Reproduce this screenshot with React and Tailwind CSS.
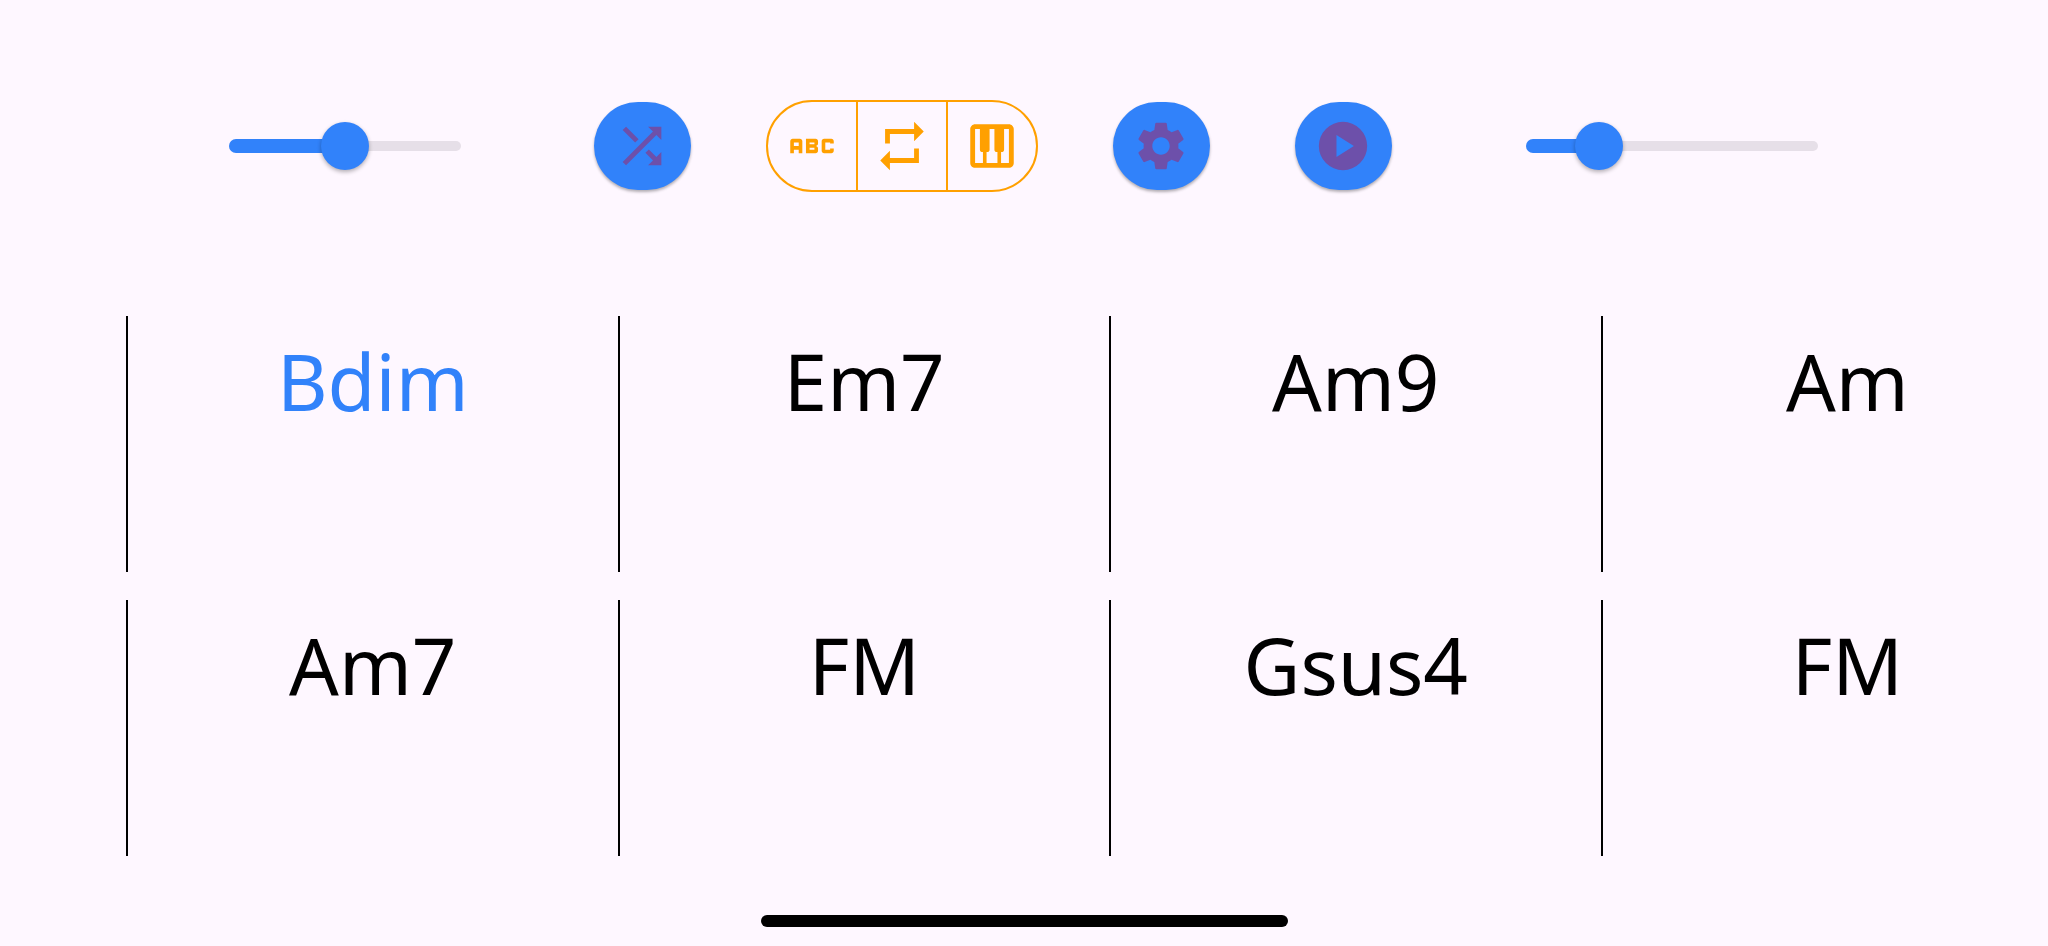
import { useState } from "react";
import { MdAbc, MdPiano, MdRepeat, MdSettings, MdShuffle } from "react-icons/md";

const chords = ["Bdim", "Em7", "Am9", "Am", "Am7", "FM", "Gsus4", "FM"];

function PlayCircle({ className }) {
  return (
    <svg viewBox="0 0 24 24" fill="currentColor" className={className}>
      <path
        fillRule="evenodd"
        d="M12 2a10 10 0 1 0 0 20 10 10 0 0 0 0-20ZM9.3 16.6V7.4l7.2 4.6Z"
      />
    </svg>
  );
}

function Slider({ label, initial, className }) {
  const [value, setValue] = useState(initial);
  return (
    <div className={`grid items-center ${className}`}>
      <div className="col-start-1 row-start-1 h-[10px] rounded-full bg-[#e6dfe8]" />
      <div
        className="col-start-1 row-start-1 h-[14px] rounded-full bg-[#3182fa]"
        style={{ width: `${value}%` }}
      />
      <input
        type="range"
        aria-label={label}
        min="0"
        max="100"
        value={value}
        onChange={(e) => setValue(Number(e.target.value))}
        className="relative col-start-1 row-start-1 -mx-6 h-12 cursor-pointer appearance-none bg-transparent [&::-webkit-slider-thumb]:size-12 [&::-webkit-slider-thumb]:appearance-none [&::-webkit-slider-thumb]:rounded-full [&::-webkit-slider-thumb]:bg-[#3182fa] [&::-webkit-slider-thumb]:shadow-[0_2px_4px_rgba(0,0,0,0.3)]"
      />
    </div>
  );
}

function RoundButton({ label, icon: Icon }) {
  return (
    <button
      type="button"
      aria-label={label}
      className="flex h-[88px] w-[97px] shrink-0 items-center justify-center rounded-full bg-[#3182fa] text-[#6d50aa] shadow-[0_2px_3px_rgba(0,0,0,0.3)]"
    >
      <Icon className="size-[58px]" />
    </button>
  );
}

function SegmentButton({ label, icon: Icon }) {
  return (
    <button
      type="button"
      aria-label={label}
      className="flex flex-1 items-center justify-center"
    >
      <Icon className="size-[58px]" />
    </button>
  );
}

export default function App() {
  const [current, setCurrent] = useState(0);
  return (
    <div className="flex min-h-screen flex-col overflow-hidden bg-[#fef7ff] font-['Noto_Sans',sans-serif] text-black">
      <header className="flex items-center justify-center pt-[100px] pr-0.5">
        <Slider label="Tempo" initial={50} className="w-[232px]" />
        <div className="mr-[134px] ml-[133px] flex items-center gap-[75px]">
          <RoundButton label="Shuffle" icon={MdShuffle} />
          <div className="flex h-[92px] w-[272px] shrink-0 divide-x-2 divide-[#ffa000] rounded-full border-2 border-[#ffa000] text-[#ffa000]">
            <SegmentButton label="Chord names" icon={MdAbc} />
            <SegmentButton label="Repeat" icon={MdRepeat} />
            <SegmentButton label="Piano" icon={MdPiano} />
          </div>
          <div className="flex gap-[85px]">
            <RoundButton label="Settings" icon={MdSettings} />
            <RoundButton label="Play" icon={PlayCircle} />
          </div>
        </div>
        <Slider label="Volume" initial={25} className="w-[292px]" />
      </header>

      <main className="mt-[124px] grid grid-cols-[repeat(4,24vw)] gap-y-7 pl-[126px]">
        {chords.map((chord, i) => (
          <button
            key={i}
            type="button"
            onClick={() => setCurrent(i)}
            className={`flex h-64 justify-center border-l-2 border-black pt-3 text-[78px] leading-[106px] ${
              i === current ? "text-[#3182fa]" : "text-black"
            }`}
          >
            {chord}
          </button>
        ))}
      </main>

      <footer className="mt-auto flex justify-center pb-[19px]">
        <div className="h-3 w-[527px] rounded-full bg-black" />
      </footer>
    </div>
  );
}
